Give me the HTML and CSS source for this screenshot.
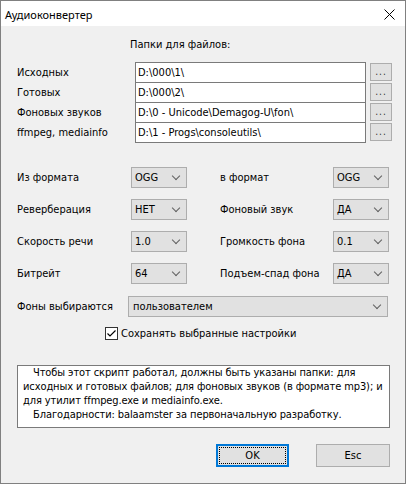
FILE: index.html
```html
<!doctype html>
<html>
<head>
    <meta charset="utf-8">
    <title>Аудиоконвертер</title>
    <link rel="stylesheet" href="styles.css">
</head>
<body>
    <div class="window">
        <div class="titlebar">
            <span class="title">Аудиоконвертер</span>
            <svg class="close" width="11" height="11" viewBox="0 0 11 11">
                <path d="M0.5 0.5 L10.5 10.5 M10.5 0.5 L0.5 10.5" stroke="#000" stroke-width="1" fill="none"/>
            </svg>
        </div>

        <div class="dialog">
            <div class="heading">Папки для файлов:</div>

            <div class="folders">
                <label>Исходных</label>
                <div class="path">D:\000\1\</div>
                <button type="button" class="browse">...</button>

                <label>Готовых</label>
                <div class="path">D:\000\2\</div>
                <button type="button" class="browse">...</button>

                <label>Фоновых звуков</label>
                <div class="path">D:\0 - Unicode\Demagog-U\fon\</div>
                <button type="button" class="browse">...</button>

                <label>ffmpeg, mediainfo</label>
                <div class="path">D:\1 - Progs\consoleutils\</div>
                <button type="button" class="browse">...</button>
            </div>

            <div class="options">
                <label>Из формата</label>
                <div class="combo"><span>OGG</span><i class="chevron"></i></div>
                <label class="right">в формат</label>
                <div class="combo"><span>OGG</span><i class="chevron"></i></div>

                <label>Реверберация</label>
                <div class="combo"><span>НЕТ</span><i class="chevron"></i></div>
                <label class="right">Фоновый звук</label>
                <div class="combo"><span>ДА</span><i class="chevron"></i></div>

                <label>Скорость речи</label>
                <div class="combo"><span>1.0</span><i class="chevron"></i></div>
                <label class="right">Громкость фона</label>
                <div class="combo"><span>0.1</span><i class="chevron"></i></div>

                <label>Битрейт</label>
                <div class="combo"><span>64</span><i class="chevron"></i></div>
                <label class="right">Подъем-спад фона</label>
                <div class="combo"><span>ДА</span><i class="chevron"></i></div>
            </div>

            <div class="wide-row">
                <label>Фоны выбираются</label>
                <div class="combo"><span>пользователем</span><i class="chevron"></i></div>
            </div>

            <div class="check-row">
                <svg class="checkbox" width="13" height="13" viewBox="0 0 13 13">
                    <rect x="0.5" y="0.5" width="12" height="12" fill="#fff" stroke="#333"/>
                    <path d="M2.5 6.5 L5 9 L10.5 3.5" stroke="#000" stroke-width="1.2" fill="none"/>
                </svg>
                <span>Сохранять выбранные настройки</span>
            </div>

            <div class="info">
                <p>Чтобы этот скрипт работал, должны быть указаны папки: для исходных и готовых файлов; для фоновых звуков (в формате mp3); и для утилит ffmpeg.exe и mediainfo.exe.</p>
                <p>Благодарности: balaamster за первоначальную разработку.</p>
            </div>

            <div class="actions">
                <button type="button" class="btn default"><span>OK</span></button>
                <button type="button" class="btn">Esc</button>
            </div>
        </div>
    </div>
</body>
</html>
```

FILE: styles.css
```css
/* Reset */
* { padding:0; margin:0; box-sizing:border-box; }

:root {
    --face: #f0f0f0;
    --control: #e1e1e1;
    --control-border: #adadad;
    --field-border: #7a7a7a;
}

body {
    background-color: #fff;
    font-family: "DejaVu Sans Condensed", "DejaVu Sans", sans-serif;
    font-stretch: condensed;
    font-size: 11px;
    color: #000;
}

.window {
    width: 406px;
    height: 484px;
    border: 1px solid #808080;
    background-color: var(--face);
    display: flex;
    flex-direction: column;
}

/* Title bar */
.titlebar {
    height: 25px;
    background-color: #fff;
    display: flex;
    align-items: center;
    justify-content: space-between;
    padding: 0 10px 0 4px;
}
.title {
    font-family: "Noto Sans", "Open Sans", sans-serif;
    font-stretch: normal;
    font-size: 11px;
    margin-top: 1px;
}
.close { display:block; margin-top: 2px; }

/* Dialog body */
.dialog {
    padding: 0 15px 0 16px;
    display: flex;
    flex-direction: column;
}
.heading {
    margin-top: 11px;
    padding-left: 113px;
    line-height: 15px;
}
label { line-height: 15px; }

/* Folder rows */
.folders {
    margin-top: 10px;
    display: grid;
    grid-template-columns: 114px 231px 22px;
    grid-auto-rows: 20px;
    column-gap: 4px;
    align-items: center;
}
.folders label { padding-top: 1px; }
.path {
    align-self: start;
    height: 21px;
    border: 1px solid var(--field-border);
    background-color: #fff;
    padding: 0 2px;
    line-height: 19px;
    white-space: nowrap;
    overflow: hidden;
}
.browse {
    align-self: start;
    margin-top: 1px;
    height: 18px;
    border: 1px solid var(--control-border);
    background-color: var(--control);
    font: inherit;
    font-size: 10px;
    line-height: 14px;
    color: #333;
    letter-spacing: 1px;
}

/* Option combos */
.options {
    margin-top: 25px;
    display: grid;
    grid-template-columns: 114px 56px 146px 56px;
    grid-auto-rows: 21px;
    row-gap: 11px;
    align-items: center;
}
.options label.right { padding-left: 33px; }
.combo {
    height: 21px;
    border: 1px solid var(--control-border);
    background-color: var(--control);
    display: flex;
    align-items: center;
    justify-content: space-between;
    padding: 0 7px 0 3px;
    white-space: nowrap;
}
.chevron {
    width: 6px;
    height: 6px;
    border-right: 1px solid #606060;
    border-bottom: 1px solid #606060;
    transform: rotate(45deg);
    margin-top: -4px;
}

.wide-row {
    margin-top: 12px;
    display: grid;
    grid-template-columns: 111px 260px;
    align-items: center;
}
.wide-row .combo { padding-left: 4px; }

.check-row {
    margin-top: 9px;
    padding-left: 88px;
    display: flex;
    align-items: center;
    gap: 3px;
    line-height: 15px;
}
.checkbox { display:block; }

/* Info box */
.info {
    margin-top: 24px;
    border: 1px solid var(--field-border);
    background-color: #fff;
    padding: 0 2px 5px 5px;
    line-height: 14px;
    letter-spacing: -0.1px;
}
.info p { text-indent: 10px; }

/* Buttons */
.actions {
    margin-top: 16px;
    display: flex;
    justify-content: flex-end;
    gap: 27px;
}
.btn {
    width: 74px;
    height: 23px;
    border: 1px solid var(--control-border);
    background-color: var(--control);
    font: inherit;
    color: #000;
}
.btn.default {
    width: 73px;
    border: 2px solid #0078d7;
    padding: 1px;
}
.btn.default span {
    display: block;
    height: 100%;
    border: 1px dotted #000;
    line-height: 15px;
}
```
